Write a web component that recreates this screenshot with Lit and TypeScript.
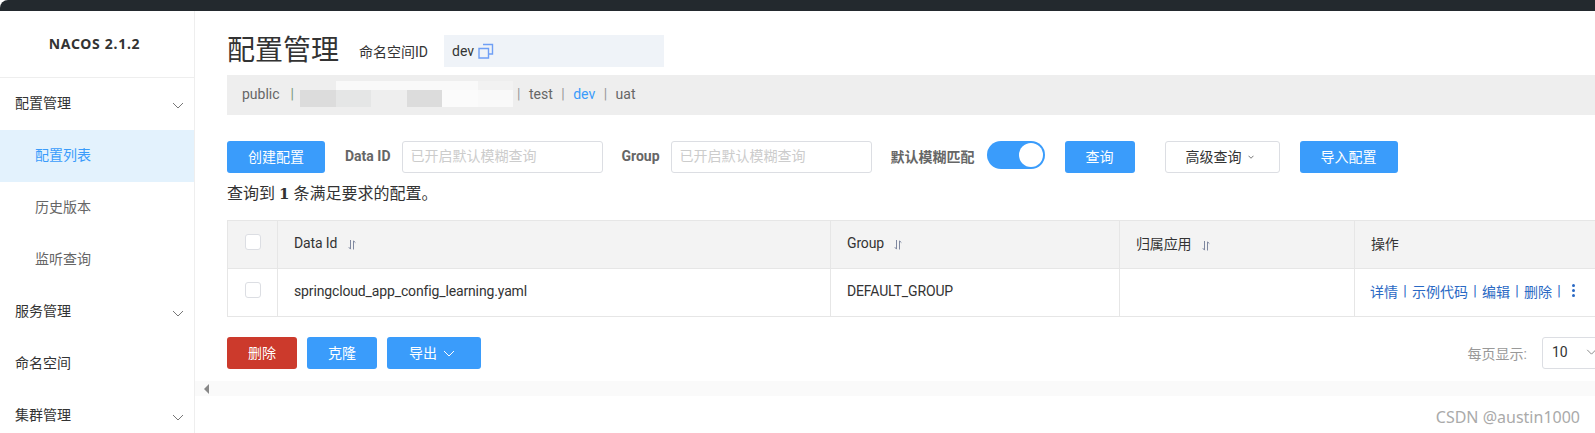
import { LitElement, html, css, svg } from "lit";
import { customElement } from "lit/decorators.js";

const chevron = (cls: string) => html`<svg class=${cls} viewBox="0 0 12 7" fill="none" stroke="currentColor" stroke-width="1"><path d="M1 1l5 5 5-5"/></svg>`;
const sortIcon = html`<svg class="sort" viewBox="0 0 8 10" fill="none" stroke="#7f88a0" stroke-width="1"><path d="M2.5 0v9M0.8 7.2L2.5 9.2M5.5 9.5V1M5.5 .8L7.4 2.6"/></svg>`;
const copyIcon = svg`<path d="M5 1.5h9.5v9.5H11M1 5.5h9.5V15H1z" fill="none" stroke="#6f9ff5" stroke-width="1.4"/>`;

@customElement("app-root")
export class AppRoot extends LitElement {
  static styles = css`
    :host { display: block; width: 1595px; height: 433px; overflow: hidden; background: #fff; color: #333;
      font: 14px Roboto, "Noto Sans CJK SC", sans-serif; }
    * { box-sizing: border-box; }
    .top { height: 11px; background: #23292e; border-top-left-radius: 8px; }
    .layout { display: flex; height: 422px; }
    .side { width: 195px; flex: none; border-right: 1px solid #eee; }
    .brand { height: 67px; border-bottom: 1px solid #eee; display: flex; align-items: center; justify-content: center;
      font: bold 14px "Noto Sans", sans-serif; letter-spacing: 0.7px; color: #333; padding: 0 5px 1px 0; }
    .item { height: 52px; display: flex; align-items: center; justify-content: space-between; padding: 0 10px 5px 15px; color: #333; }
    .item .chev { margin-top: 7px; }
    .sub { padding-left: 35px; color: #666; }
    .active { background: #e3f2fd; color: #3a9cfb; }
    .chev { width: 12px; height: 7px; color: #777; }
    .main { flex: 1; min-width: 0; padding: 24px 0 0 32px; position: relative; overflow: hidden; }
    .head { display: flex; align-items: center; height: 32px; }
    h1 { margin: 0 20px 0 0; font-size: 28px; font-weight: 400; line-height: 32px; color: #333; }
    .ns-label { margin-right: 16px; padding-bottom: 1px; }
    .ns-box { width: 220px; height: 32px; background: #eff3f8; padding-left: 8px; display: flex; align-items: center; gap: 4px; padding-bottom: 1px; }
    .ns-box svg { width: 16px; height: 16px; }
    .bar { position: relative; height: 40px; margin-top: 8px; background: #eee; display: flex; align-items: center; padding: 0 0 2px 15px; color: #666; }
    .sep { color: #7a9a7a; margin: 0 11px; }
    .sep.g { color: #999; margin: 0 8.5px; }
    .sep.first { margin-left: 0; }
    .gap { width: 212px; }
    .on { color: #3a9cfb; }
    .blur { position: absolute; left: 73px; top: 6px; width: 213px; height: 26px; display: grid;
      grid-template-columns: repeat(6, 1fr); grid-template-rows: 9px 17px; }
    .b0 { background: #eee; } .b1 { background: #f9f9f9; } .b2 { background: #dcdcdc; } .b3 { background: #e5e6e6; }
    .b4 { background: #fbfbfb; } .b5 { background: #f2f2f2; }
    .tools { display: flex; align-items: center; margin-top: 26px; height: 32px; }
    .btn { height: 32px; border: 0; border-radius: 3px; background: #3a9cfb; color: #fff; font: inherit; padding: 0 0 3px;
      display: flex; align-items: center; justify-content: center; flex: none; }
    .w98 { width: 98px; } .w70 { width: 70px; } .w96 { width: 98px; }
    .lbl { font-weight: 700; color: #666; margin-left: 20px; margin-right: 11px; padding-bottom: 2px; }
    .lbl.g { margin-left: 19px; margin-right: 11px; }
    .lbl.f { margin-left: 19px; margin-right: 12px; }
    input { width: 201px; height: 32px; border: 1px solid #dcdee3; border-radius: 3px; padding: 0 8px 3px; font: inherit; outline: none; flex: none; }
    input::placeholder { color: #ccc; opacity: 1; }
    .switch { width: 58px; height: 28px; border-radius: 14px; background: #3a9cfb; display: flex; align-items: center; justify-content: flex-end; padding-right: 2px; margin-right: 20px; margin-top: -5px; flex: none; }
    .knob { width: 24px; height: 24px; border-radius: 50%; background: #fff; }
    .adv { width: 115px; margin: 0 20px 0 30px; background: #fff; color: #333; border: 1px solid #dcdee3; gap: 6px; padding-right: 5px; }
    .adv .chev { width: 6px; height: 4px; margin-top: 2px; stroke-width: 2; }
    .found { margin-top: 7px; font-size: 16px; line-height: 27px; height: 27px; color: #333; }
    .found b { font-family: "DejaVu Serif", serif; font-size: 15px; }
    table { border-collapse: collapse; table-layout: fixed; width: 1430px; margin-top: 13px; color: #333; }
    th, td { border: 1px solid #e6e6e6; padding: 0 0 4px 16px; font-weight: 400; text-align: left; height: 48px; letter-spacing: -0.14px; }
    th { background: #f3f3f3; }
    th.chk, td.chk { padding: 0 0 6px; }
    .box { display: block; width: 16px; height: 16px; margin-left: 17px; background: #fff; border: 1px solid #dcdee3; border-radius: 3px; }
    .c0 { width: 50px; } .c1 { width: 553px; } .c2 { width: 289px; } .c3 { width: 235px; } .c4 { width: 303px; }
    .sort { width: 8px; height: 10px; margin-left: 7px; vertical-align: -2px; }
    .ops { display: flex; align-items: center; color: #2a69c4; letter-spacing: 0; margin-left: -1px; }
    .ops i { font-style: normal; margin: 0 5.3px; }
    .dots { display: flex; flex-direction: column; gap: 2px; margin-left: 6px; }
    .dots span { width: 3px; height: 3px; border-radius: 50%; background: #2a69c4; }
    .foot { display: flex; align-items: center; height: 32px; margin-top: 20px; }
    .del { background: #cc3a2c; margin-right: 10px; }
    .clone { margin-right: 10px; }
    .exp { width: 94px; gap: 6px; padding-right: 4px; }
    .exp .chev { width: 12px; height: 7px; color: #fff; margin-top: 3px; }
    .pager { margin-left: auto; display: flex; align-items: center; color: #999; margin-right: -7px; }
    .select { width: 60px; height: 32px; margin-left: 15px; border: 1px solid #dcdee3; border-radius: 3px; color: #333; display: flex; align-items: center; justify-content: space-between; padding: 0 4px 2px 9px; font-size: 14px; flex: none; }
    .select .chev { width: 11px; height: 6px; }
    .scroll { position: absolute; left: 0; right: 0; top: 370px; height: 15px; background: #fafafa; display: flex; align-items: center; padding-left: 9px; }
    .tri { width: 0; height: 0; border-style: solid; border-width: 5px 5px 5px 0; border-color: transparent #888 transparent transparent; }
    .mark { position: absolute; right: 15px; top: 396px; font: 16px "Noto Sans", sans-serif; color: #aaa; line-height: 20px; }
  `;

  render() {
    const ops = ["详情", "示例代码", "编辑", "删除"];
    return html`
      <div class="top"></div>
      <div class="layout">
        <aside class="side">
          <div class="brand">NACOS 2.1.2</div>
          <div class="item">配置管理 ${chevron("chev")}</div>
          <div class="item sub active">配置列表</div>
          <div class="item sub">历史版本</div>
          <div class="item sub">监听查询</div>
          <div class="item">服务管理 ${chevron("chev")}</div>
          <div class="item">命名空间</div>
          <div class="item">集群管理 ${chevron("chev")}</div>
        </aside>
        <main class="main">
          <div class="head">
            <h1>配置管理</h1>
            <span class="ns-label">命名空间ID</span>
            <div class="ns-box">dev <svg viewBox="0 0 16 16">${copyIcon}</svg></div>
          </div>
          <div class="bar">
            <span>public</span><span class="sep">|</span><span class="gap"></span>
            <span class="sep g first">|</span><span>test</span><span class="sep g">|</span>
            <span class="on">dev</span><span class="sep g">|</span><span>uat</span>
            <div class="blur">
              <span class="b0"></span><span class="b1"></span><span class="b1"></span><span class="b1"></span><span class="b1"></span><span class="b5"></span>
              <span class="b2"></span><span class="b3"></span><span class="b0"></span><span class="b2"></span><span class="b4"></span><span class="b1"></span>
            </div>
          </div>
          <div class="tools">
            <button class="btn w98">创建配置</button>
            <span class="lbl">Data ID</span>
            <input placeholder="已开启默认模糊查询" />
            <span class="lbl g">Group</span>
            <input placeholder="已开启默认模糊查询" />
            <span class="lbl f">默认模糊匹配</span>
            <div class="switch"><span class="knob"></span></div>
            <button class="btn w70">查询</button>
            <button class="btn adv">高级查询 ${chevron("chev")}</button>
            <button class="btn w96">导入配置</button>
          </div>
          <div class="found">查询到 <b>1</b> 条满足要求的配置。</div>
          <table>
            <colgroup><col class="c0" /><col class="c1" /><col class="c2" /><col class="c3" /><col class="c4" /></colgroup>
            <tr>
              <th class="chk"><span class="box"></span></th>
              <th>Data Id ${sortIcon}</th>
              <th>Group ${sortIcon}</th>
              <th>归属应用 ${sortIcon}</th>
              <th>操作</th>
            </tr>
            <tr>
              <td class="chk"><span class="box"></span></td>
              <td>springcloud_app_config_learning.yaml</td>
              <td>DEFAULT_GROUP</td>
              <td></td>
              <td><div class="ops">
                ${ops.map((o) => html`<span>${o}</span><i>|</i>`)}
                <span class="dots"><span></span><span></span><span></span></span>
              </div></td>
            </tr>
          </table>
          <div class="foot">
            <button class="btn w70 del">删除</button>
            <button class="btn w70 clone">克隆</button>
            <button class="btn exp">导出 ${chevron("chev")}</button>
            <div class="pager">每页显示:
              <div class="select">10 ${chevron("chev")}</div>
            </div>
          </div>
          <div class="scroll"><span class="tri"></span></div>
          <div class="mark">CSDN @austin1000</div>
        </main>
      </div>
    `;
  }
}
